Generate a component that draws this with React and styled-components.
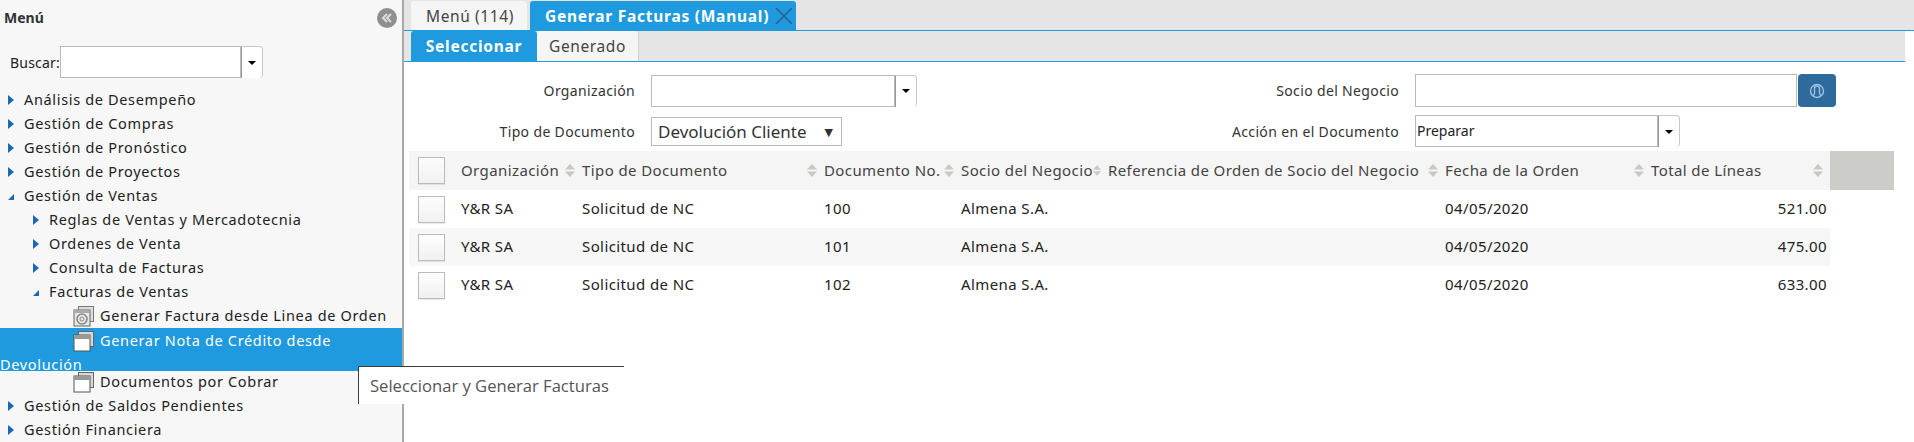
import React from 'react'
import styled, { createGlobalStyle } from 'styled-components'

const Global = createGlobalStyle`
  html, body { margin: 0; padding: 0; background: #fff; }
  body { font-family: "Noto Sans", "DejaVu Sans", sans-serif; font-size: 14px; color: #222; overflow: hidden; }
`

const Page = styled.div`
  position: relative;
  display: flex;
  width: 1914px;
  height: 442px;
  overflow: hidden;
`

/* sidebar */
const Side = styled.aside`
  width: 402px;
  flex: none;
  background: #f7f7f7;
  border-right: 2px solid #a9a9a9;
`
const SideHead = styled.div`
  display: flex;
  align-items: center;
  justify-content: space-between;
  height: 35px;
  padding: 0 5px 0 4px;
  font-weight: 700;
  font-size: 14px;
  color: #333;
`
const Collapse = styled.div`
  width: 20px;
  height: 20px;
  border-radius: 50%;
  background: #8f8f8f;
  color: #ddd;
  display: flex;
  align-items: center;
  justify-content: center;
`
const Search = styled.div`
  display: flex;
  align-items: center;
  height: 32px;
  margin: 11px 0 9px 10px;
  font-size: 14px;
`
const SearchLabel = styled.span`
  width: 50px;
  flex: none;
  letter-spacing: 0.2px;
`
const Tree = styled.div`
  font-size: 14.5px;
  letter-spacing: 0.66px;
  color: #222;
`
const Node = styled.div`
  display: flex;
  align-items: center;
  height: 24px;
  padding-left: ${p => p.$level * 25 + 8}px;
  svg { width: 6px; margin: 2px 10px 0 0; flex: none; }
`
const Leaf = styled.div`
  height: 24px;
  line-height: 24px;
  white-space: normal;
`
const ActiveLeaf = styled.div`
  height: 43px;
  margin: 3px 0 -2px;
  background: #1f9ade;
  color: #fff;
  line-height: 24px;
  & > div { margin-top: -2px; }
`
const LeafIcon = styled.svg`
  display: inline-block;
  width: 22px;
  height: 22px;
  margin: 0 5px 0 73px;
  vertical-align: -6px;
`

/* main */
const Main = styled.main`
  flex: 1;
  min-width: 0;
`
const TabBar = styled.div`
  display: flex;
  align-items: flex-end;
  gap: 3px;
  height: 30px;
  padding-left: 7px;
  background: #e5e5e5;
  border-bottom: 1px solid #1f9ade;
`
const Tab = styled.div`
  display: flex;
  align-items: center;
  gap: 6px;
  height: 29px;
  padding: 0 ${p => p.$active ? '0 0 15px' : '15px'};
  width: ${p => p.$width}px;
  box-sizing: border-box;
  border-radius: 3px 3px 0 0;
  background: ${p => p.$active ? '#1f9ade' : '#f5f5f5'};
  color: ${p => p.$active ? '#fff' : '#444'};
  font-weight: ${p => p.$active ? 700 : 400};
  font-size: 15.5px;
  letter-spacing: ${p => p.$active ? 0.75 : 0.6}px;
  white-space: nowrap;
`
const SubBar = styled(TabBar)`
  gap: 0;
  margin-right: 9px;
`
const SubTab = styled(Tab)`
  justify-content: center;
  padding: 0;
  height: 30px;
  border-right: ${p => p.$active ? 'none' : '1px solid #d0d0d0'};
`
const Form = styled.div`
  display: grid;
  grid-template-columns: 231px 504px 228px 1fr;
  column-gap: 16px;
  row-gap: 8px;
  align-items: center;
  padding-top: 12px;
`
const Label = styled.label`
  text-align: right;
  color: #333;
  font-size: 14px;
  letter-spacing: 0.35px;
`
const Combo = styled.div`
  display: flex;
  width: ${p => p.$width}px;
  height: 32px;
`
const Input = styled.div`
  flex: 1;
  box-sizing: border-box;
  border: 1px solid #b9b9b9;
  background: #fff;
  padding: 0 1px;
  line-height: 30px;
  font-size: 14px;
`
const Drop = styled.div`
  width: 22px;
  flex: none;
  box-sizing: border-box;
  border: 1px solid #c8c8c8;
  border-left: 1px solid #999;
  border-bottom: none;
  border-radius: 0 4px 4px 0;
  background: #fff;
  display: flex;
  align-items: center;
  justify-content: center;
  &::after {
    content: '';
    border: 4px solid transparent;
    border-top: 4px solid #000;
    border-bottom: none;
  }
`
const Plain = styled.div`
  display: flex;
  align-items: center;
  justify-content: space-between;
  box-sizing: border-box;
  width: 191px;
  height: 29px;
  padding: 0 8px 0 6px;
  border: 1px solid #b9b9b9;
  font-size: 17px;
  color: #333;
`
const SelectMark = styled.span`
  font-size: 11px;
`
const PartnerBtn = styled.div`
  width: 38px;
  height: 33px;
  flex: none;
  margin-left: 1px;
  border-radius: 4px;
  background: #2f6a9c;
  display: flex;
  align-items: center;
  justify-content: center;
`
const PartnerWrap = styled.div`
  display: flex;
  width: 421px;
  height: 33px;
`

const Table = styled.div`
  margin: 4px 0 0 5px;
  width: 1485px;
  letter-spacing: 0.4px;
  font-size: 15px;
`
const HeadRow = styled.div`
  display: grid;
  grid-template-columns: 52px 121px 242px 137px 147px 337px 206px 179px 64px;
  height: 39px;
  background: #f5f5f5;
  align-items: center;
`
const Row = styled.div`
  display: grid;
  grid-template-columns: 52px 121px 242px 137px 147px 337px 206px 179px;
  width: 1421px;
  height: 38px;
  align-items: center;
  background: ${p => p.$alt ? '#f7f7f7' : '#fff'};
`
const HeadCell = styled.div`
  display: flex;
  align-items: center;
  justify-content: space-between;
  padding: 0 7px 1px 0;
  color: #444;
  white-space: nowrap;
`
const Cell = styled.div`
  text-align: ${p => p.$right ? 'right' : 'left'};
  padding: 0 ${p => p.$right ? 3 : 0}px 2px 0;
  white-space: nowrap;
`
const Check = styled.div`
  width: 27px;
  height: 27px;
  box-sizing: border-box;
  margin-left: 9px;
  border: 1px solid #bcbcbc;
  background: linear-gradient(#fdfdfd, #f1f1f1);
  box-shadow: 0 1px 1px rgba(0, 0, 0, 0.08);
`
const Filler = styled.div`
  height: 39px;
  background: #ccccc8;
`
const Tooltip = styled.div`
  position: absolute;
  left: 358px;
  top: 366px;
  width: 266px;
  height: 38px;
  box-sizing: border-box;
  padding-left: 11px;
  background: #fff;
  border-top: 1px solid #3c3c3c;
  border-left: 1px solid #3c3c3c;
  line-height: 38px;
  font-family: "Open Sans", sans-serif;
  font-size: 16.6px;
  color: #555;
  white-space: nowrap;
`

const Arrow = ({ open }) => (
  <svg viewBox="0 0 6 10" height="10">
    {open
      ? <path d="M0 9 L6 3 L6 9 Z" fill="#1a66b8" />
      : <path d="M0 0 L6 5 L0 10 Z" fill="#1a66b8" />}
  </svg>
)

const WindowIcon = () => (
  <LeafIcon viewBox="0 0 22 22">
    <rect x="5.5" y="1.5" width="15" height="15" fill="#d8d8d8" stroke="#666" />
    <rect x="1" y="5" width="16" height="16" fill="#fff" stroke="#555" />
    <rect x="1" y="5" width="16" height="4" fill="#999" />
  </LeafIcon>
)

const ReportIcon = () => (
  <LeafIcon viewBox="0 0 22 22">
    <rect x="5.5" y="1.5" width="15" height="15" fill="#ddd" stroke="#777" />
    <rect x="1" y="5" width="16" height="16" fill="#e8e8e8" stroke="#666" />
    <rect x="1" y="5" width="16" height="3" fill="#aaa" />
    <circle cx="9" cy="14" r="5" fill="none" stroke="#888" strokeWidth="1.6" />
    <circle cx="9" cy="14" r="2" fill="none" stroke="#888" />
  </LeafIcon>
)

const SortIcon = () => (
  <svg width="10" height="13" viewBox="0 0 10 13">
    <path d="M5 0 L10 5.5 L0 5.5 Z M0 7.5 L10 7.5 L5 13 Z" fill="#c9c9c3" />
  </svg>
)

const columns = ['Organización', 'Tipo de Documento', 'Documento No.', 'Socio del Negocio', 'Referencia de Orden de Socio del Negocio', 'Fecha de la Orden', 'Total de Líneas']

const rows = [
  { doc: '100', total: '521.00' },
  { doc: '101', total: '475.00' },
  { doc: '102', total: '633.00' },
]

export default function App() {
  return (
    <Page>
      <Global />
      <Side>
        <SideHead>
          Menú
          <Collapse>
            <svg width="12" height="10" viewBox="0 0 12 10" fill="none" stroke="#ddd" strokeWidth="2">
              <path d="M6 1 L2 5 L6 9 M10 1 L6 5 L10 9" />
            </svg>
          </Collapse>
        </SideHead>
        <Search>
          <SearchLabel>Buscar:</SearchLabel>
          <Combo $width={203}><Input /><Drop /></Combo>
        </Search>
        <Tree>
          <Node $level={0}><Arrow />Análisis de Desempeño</Node>
          <Node $level={0}><Arrow />Gestión de Compras</Node>
          <Node $level={0}><Arrow />Gestión de Pronóstico</Node>
          <Node $level={0}><Arrow />Gestión de Proyectos</Node>
          <Node $level={0}><Arrow open />Gestión de Ventas</Node>
          <Node $level={1}><Arrow />Reglas de Ventas y Mercadotecnia</Node>
          <Node $level={1}><Arrow />Ordenes de Venta</Node>
          <Node $level={1}><Arrow />Consulta de Facturas</Node>
          <Node $level={1}><Arrow open />Facturas de Ventas</Node>
          <Leaf><ReportIcon />Generar Factura desde Linea de Orden</Leaf>
          <ActiveLeaf><div><WindowIcon />Generar Nota de Crédito desde Devolución</div></ActiveLeaf>
          <Leaf><WindowIcon />Documentos por Cobrar</Leaf>
          <Node $level={0}><Arrow />Gestión de Saldos Pendientes</Node>
          <Node $level={0}><Arrow />Gestión Financiera</Node>
        </Tree>
      </Side>
      <Main>
        <TabBar>
          <Tab $width={116}>Menú (114)</Tab>
          <Tab $active $width={266}>
            Generar Facturas (Manual)
            <svg width="18" height="18" viewBox="0 0 18 18" stroke="#2a5d80" strokeWidth="1.4">
              <path d="M1 1 L17 17 M17 1 L1 17" />
            </svg>
          </Tab>
        </TabBar>
        <SubBar>
          <SubTab $active $width={126}>Seleccionar</SubTab>
          <SubTab $width={102}>Generado</SubTab>
        </SubBar>
        <Form>
          <Label>Organización</Label>
          <Combo $width={266}><Input /><Drop /></Combo>
          <Label>Socio del Negocio</Label>
          <PartnerWrap>
            <Input />
            <PartnerBtn>
              <svg width="16" height="16" viewBox="0 0 16 16" fill="none" stroke="#9fc0dc" strokeWidth="1.4">
                <circle cx="8" cy="8" r="6.5" />
                <path d="M5.5 11 V5.5 a2.5 2.5 0 0 1 5 0 V11 M3.5 13 L5.5 11 M12.5 13 L10.5 11" />
              </svg>
            </PartnerBtn>
          </PartnerWrap>
          <Label>Tipo de Documento</Label>
          <Plain>Devolución Cliente<SelectMark>▼</SelectMark></Plain>
          <Label>Acción en el Documento</Label>
          <Combo $width={265}><Input>Preparar</Input><Drop /></Combo>
        </Form>
        <Table>
          <HeadRow>
            <Check />
            {columns.map(c => <HeadCell key={c}>{c}<SortIcon /></HeadCell>)}
            <Filler />
          </HeadRow>
          {rows.map((r, i) => (
            <Row key={r.doc} $alt={i === 1}>
              <Check />
              <Cell>Y&amp;R SA</Cell>
              <Cell>Solicitud de NC</Cell>
              <Cell>{r.doc}</Cell>
              <Cell>Almena S.A.</Cell>
              <Cell />
              <Cell>04/05/2020</Cell>
              <Cell $right>{r.total}</Cell>
            </Row>
          ))}
        </Table>
      </Main>
      <Tooltip>Seleccionar y Generar Facturas</Tooltip>
    </Page>
  )
}
